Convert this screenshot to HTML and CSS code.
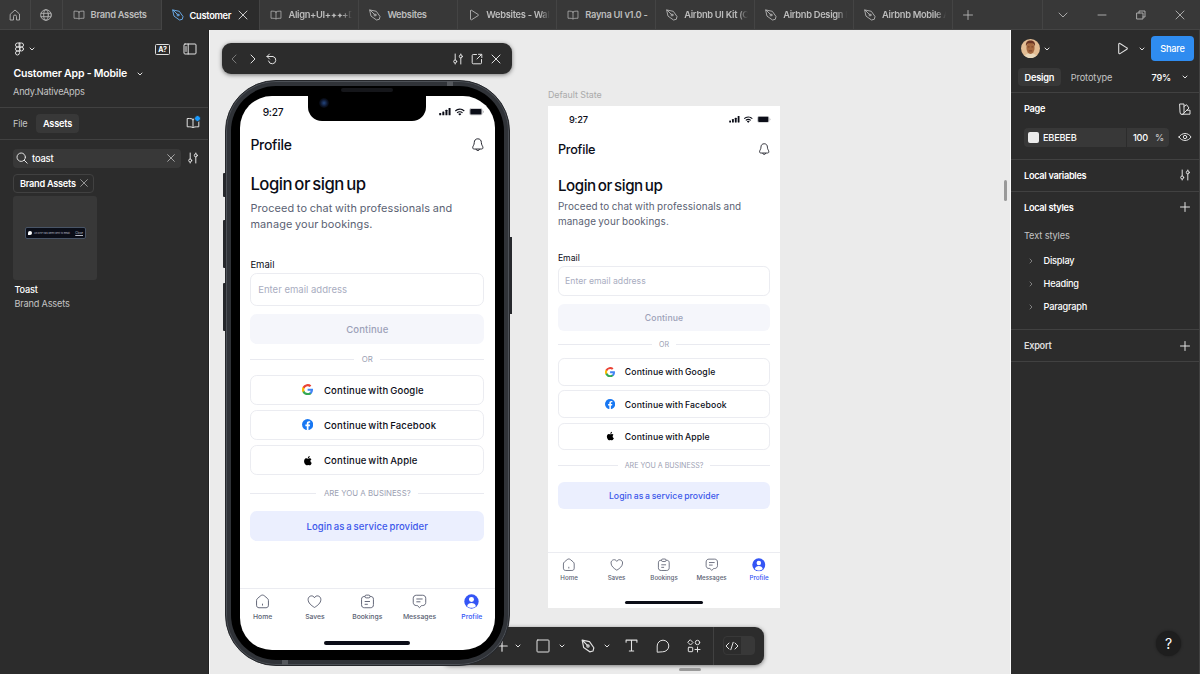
FILE: index.html
```html
<!DOCTYPE html>
<html lang="en">
<head>
    <meta charset="UTF-8">
    <meta name="viewport" content="width=device-width, initial-scale=1.0">
    <title>Customer App - Mobile</title>
    <link rel="stylesheet" href="styles.css">
</head>
<body>

<!-- Icons -->
<svg class="sprite" width="0" height="0">
    <symbol id="i-home" viewBox="0 0 12 12"><path d="M1.500 5L6 1l4.500 4v6H7.500V7.500a1.500 1.500 0 0 0-3 0V11h-3z"/></symbol>
    <symbol id="i-globe" viewBox="0 0 12 12"><circle cx="6" cy="6" r="5.300"/><ellipse cx="6" cy="6" rx="2.300" ry="5.300"/><path d="M1 4.300h10M1 7.700h10"/></symbol>
    <symbol id="i-book" viewBox="0 0 14 12"><path d="M7 2.500C6 1.500 4.500 1.500 1.200 1.500v8.300c3.300 0 4.800 0 5.800 1 1-1 2.500-1 5.800-1V1.500C9.500 1.500 8 1.500 7 2.500zM7 2.500v8"/></symbol>
    <symbol id="i-pen" viewBox="0 0 12 12"><path d="M1 1l6.300 1.300 3.700 5.200-.7 2.800-2.800.7L2.300 7.300zM1 1l4.300 4.300"/><circle cx="6" cy="6" r="1"/></symbol>
    <symbol id="i-play" viewBox="0 0 12 12"><path d="M2.500 2v8c0 .7.600 1 1.200.7l6.300-4c.6-.3.600-1 0-1.300l-6.300-4c-.6-.4-1.200-.1-1.200.6z"/></symbol>
    <symbol id="i-close" viewBox="0 0 12 12"><path d="M2 2l8 8M10 2l-8 8"/></symbol>
    <symbol id="i-plus" viewBox="0 0 12 12"><path d="M6 1.500v9M1.500 6h9"/></symbol>
    <symbol id="i-down" viewBox="0 0 6 6"><path d="M1 2l2 2 2-2"/></symbol>
    <symbol id="i-wide-down" viewBox="0 0 12 12"><path d="M2 4l4 4 4-4"/></symbol>
    <symbol id="i-left" viewBox="0 0 12 12"><path d="M8 2L4 6l4 4"/></symbol>
    <symbol id="i-right" viewBox="0 0 12 12"><path d="M4 2l4 4-4 4"/></symbol>
    <symbol id="i-undo" viewBox="0 0 12 12"><path d="M3.500 1L1 3.500 3.500 6M1 3.500h6a3.700 3.700 0 1 1-4.500 4.500"/></symbol>
    <symbol id="i-sliders" viewBox="0 0 12 12"><path d="M3.200 1v6M3.200 10.200V11M8.800 11V5M8.800 1v.8"/><circle cx="3.200" cy="8.500" r="1.500"/><circle cx="8.800" cy="3.400" r="1.500"/></symbol>
    <symbol id="i-open" viewBox="0 0 12 12"><path d="M5.500 1.500H2.200a1 1 0 0 0-1 1v7.300a1 1 0 0 0 1 1h7.300a1 1 0 0 0 1-1V6.500M7.500 1.300h3.300v3.300M10.500 1.500L6 6"/></symbol>
    <symbol id="i-restore" viewBox="0 0 12 12"><path d="M2 4h6v6H2zM4 4V2h6v6H8"/></symbol>
    <symbol id="i-min" viewBox="0 0 12 12"><path d="M2 6h8"/></symbol>
    <symbol id="i-figma" viewBox="0 0 10 14"><path d="M5 1H3a2 2 0 0 0 0 4h2zM5 5H3a2 2 0 0 0 0 4h2zM5 9H3a2 2 0 1 0 2 2zM5 1h2a2 2 0 0 1 0 4H5z"/><circle cx="7" cy="7" r="2"/></symbol>
    <symbol id="i-panel" viewBox="0 0 14 12"><rect x="1" y="1" width="12" height="10" rx="1"/><path d="M5.200 1v10M3 3.500v5"/></symbol>
    <symbol id="i-search" viewBox="0 0 12 12"><circle cx="5.200" cy="5.200" r="4.200"/><path d="M8.300 8.300L11.200 11.200"/></symbol>
    <symbol id="i-swatches" viewBox="0 0 12 12"><path d="M1 1h4v8.500a2 2 0 0 1-4 0zM5 3.500l2.500-1.800L10 5l-5 5M8 7.200h3v4H3"/></symbol>
    <symbol id="i-eye" viewBox="0 0 14 12"><path d="M1 6c2.800-4.700 9.200-4.700 12 0-2.800 4.700-9.200 4.700-12 0z"/><circle cx="7" cy="6" r="1.700"/></symbol>
    <symbol id="i-square" viewBox="0 0 14 14"><rect x="1" y="1" width="12" height="12" rx=".8"/></symbol>
    <symbol id="i-text" viewBox="0 0 12 12"><path d="M1 3V1h10v2M6 1v10M4 11h4"/></symbol>
    <symbol id="i-comment" viewBox="0 0 14 14"><path d="M1.200 12.800V7A5.800 5.800 0 1 1 7 12.800z"/></symbol>
    <symbol id="i-actions" viewBox="0 0 14 14"><path d="M3.500 1L6 3.500 3.500 6 1 3.500zM10.500 8v5M8 10.500h5"/><circle cx="10.500" cy="3.500" r="2.200"/><rect x="1.300" y="8.300" width="4.400" height="4.400" rx=".6"/></symbol>
    <symbol id="i-code" viewBox="0 0 14 12"><path d="M4 3L1 6l3 3M10 3l3 3-3 3M8.200 2.300L5.800 9.700"/></symbol>

    <symbol id="a-bell" viewBox="0 0 20 20"><path d="M10 1.200c3.300 0 5.200 2.300 5.200 5.400 0 4 2.300 5 2.300 7.700 0 1.400-1 1.900-2.500 1.900H5c-1.500 0-2.500-.5-2.500-1.900 0-2.700 2.300-3.700 2.300-7.700 0-3.100 1.900-5.400 5.200-5.400zM7.500 16.500c.5 2.600 4.500 2.600 5 0"/></symbol>
    <symbol id="a-home" viewBox="0 0 24 24"><path d="M2.500 10.500c0-1.500.6-2.600 1.800-3.600l5-4.200c1.600-1.300 3.800-1.300 5.400 0l5 4.200c1.200 1 1.800 2.100 1.800 3.600V18c0 2.500-1.500 4-4 4h-11c-2.500 0-4-1.500-4-4zM12 15.500v3"/></symbol>
    <symbol id="a-heart" viewBox="0 0 24 24"><path d="M12 21.500C7 18.500 1.800 14.500 1.800 8.800c0-6 7.700-8 10.200-2.800 2.500-5.200 10.200-3.200 10.200 2.800 0 5.700-5.200 9.700-10.200 12.700z"/></symbol>
    <symbol id="a-list" viewBox="0 0 24 24"><path d="M8 4H7c-3 0-4.500 1.500-4.500 4.500V17c0 3.500 1.500 5 5 5h9c3.500 0 5-1.500 5-5V8.500c0-3-1.500-4.500-4.500-4.500h-1M7.500 12h8.500M7.500 16.500h5"/><rect x="8" y="1.800" width="8" height="4.400" rx="2"/></symbol>
    <symbol id="a-message" viewBox="0 0 24 24"><path d="M7 2h10c3 0 5 2 5 5v6.500c0 3-2 5-5 5h-1.500L12 21.800l-3.500-3.300H7c-3 0-5-2-5-5V7c0-3 2-5 5-5zM7 8h10M7 12.500h6.500"/></symbol>
    <symbol id="a-user" viewBox="0 0 24 24"><circle cx="12" cy="12" r="11.500"/><circle class="cut" cx="12" cy="9" r="4"/><path class="cut" d="M5 19.500c1-7 13-7 14 0-4 3.500-10 3.500-14 0z"/></symbol>
    <symbol id="a-google" viewBox="0 0 24 24"><path fill="#4285f4" d="M23.500 12.300c0-.9-.1-1.500-.2-2.300H12v4.500h6.500c-.3 1.500-1.100 2.800-2.500 3.700v3h4c2.300-2.100 3.500-5.200 3.500-8.900z"/><path fill="#34a853" d="M12 24c3.200 0 6-1.100 7.900-2.900l-3.900-3c-1.100.7-2.400 1.200-4 1.200-3.100 0-5.700-2.100-6.700-4.900h-4v3.100C3.300 21.300 7.300 24 12 24z"/><path fill="#fbbc05" d="M5.300 14.400a7.200 7.200 0 0 1 0-4.700V6.600h-4a12 12 0 0 0 0 10.800z"/><path fill="#ea4335" d="M12 4.800c1.800 0 3.300.6 4.600 1.800L20 3.200A12 12 0 0 0 1.300 6.600l4 3.100c1-2.800 3.600-4.900 6.700-4.900z"/></symbol>
    <symbol id="a-facebook" viewBox="0 0 24 24"><circle cx="12" cy="12" r="12" fill="#1877f2"/><path fill="#fff" d="M16.700 15.500l.5-3.500h-3.300V9.800c0-1 .5-1.900 2-1.900h1.500V5s-1.400-.3-2.700-.3c-2.700 0-4.500 1.700-4.500 4.700V12h-3v3.500h3V24h3.700v-8.500z"/></symbol>
    <symbol id="a-apple" viewBox="0 0 22 24"><path d="M17 12.700c0-2.500 2-3.700 2.200-3.800-1.200-1.700-3-2-3.700-2-1.600-.2-3 .9-3.800.9s-2-.9-3.300-.9c-1.700 0-3.300 1-4.100 2.500-1.800 3-.5 7.500 1.200 10 .9 1.200 1.900 2.600 3.200 2.500 1.300 0 1.800-.8 3.300-.8 1.600 0 2 .8 3.400.8s2.300-1.200 3.100-2.400c1-1.400 1.400-2.800 1.400-2.900-.1 0-2.900-1.100-2.900-3.900zM14.500 5.300c.7-.9 1.200-2 1-3.300-1 0-2.300.7-3 1.600-.6.800-1.200 2-1 3.100 1.100.1 2.300-.6 3-1.400z"/></symbol>
    <symbol id="a-signal" viewBox="0 0 19 12"><rect x="0" y="8" width="3.200" height="4" rx=".8"/><rect x="5" y="5.500" width="3.200" height="6.500" rx=".8"/><rect x="10" y="3" width="3.200" height="9" rx=".8"/><rect x="15" y="0" width="3.200" height="12" rx=".8"/></symbol>
    <symbol id="a-wifi" viewBox="0 0 17 11"><path d="M8.500 2.500c2.300 0 4.400.9 6 2.500l1.200-1.200a10.200 10.200 0 0 0-14.400 0L2.500 5a8.500 8.500 0 0 1 6-2.500zM8.500 6.300c1.300 0 2.500.5 3.400 1.400l1.200-1.200a6.600 6.600 0 0 0-9.200 0l1.200 1.200c.9-.9 2.100-1.400 3.400-1.400zM10.800 8.900a3.300 3.300 0 0 0-4.600 0l2.300 2.400z"/></symbol>
    <symbol id="a-battery" viewBox="0 0 24 12"><rect x=".5" y=".5" width="20" height="11" rx="3" fill="none" stroke="currentColor" opacity=".4"/><rect x="1.500" y="1.500" width="18" height="9" rx="1.500"/><path d="M22 4v4c1.500-.7 1.500-3.300 0-4z" opacity=".4"/></symbol>
</svg>

<!-- The login screen, used in the canvas frame and in the preview -->
<template id="login-screen">
    <div class="status">
        <span class="time">9:27</span>
        <svg class="signal"><use href="#a-signal"/></svg>
        <svg class="wifi"><use href="#a-wifi"/></svg>
        <svg class="battery"><use href="#a-battery"/></svg>
    </div>
    <div class="app-header">
        <span>Profile</span>
        <svg><use href="#a-bell"/></svg>
    </div>
    <div class="app-body">
        <h1>Login or sign up</h1>
        <p class="intro">Proceed to chat with professionals and<br>manage your bookings.</p>
        <div class="label">Email</div>
        <div class="input">Enter email address</div>
        <div class="btn disabled">Continue</div>
        <div class="divider">OR</div>
        <div class="btn social"><svg><use href="#a-google"/></svg>Continue with Google</div>
        <div class="btn social"><svg><use href="#a-facebook"/></svg>Continue with Facebook</div>
        <div class="btn social"><svg><use href="#a-apple"/></svg>Continue with Apple</div>
        <div class="divider business">ARE YOU A BUSINESS?</div>
        <div class="btn provider">Login as a service provider</div>
    </div>
    <div class="app-nav">
        <div class="nav-items">
            <div class="nav-item"><svg><use href="#a-home"/></svg>Home</div>
            <div class="nav-item"><svg><use href="#a-heart"/></svg>Saves</div>
            <div class="nav-item"><svg><use href="#a-list"/></svg>Bookings</div>
            <div class="nav-item"><svg><use href="#a-message"/></svg>Messages</div>
            <div class="nav-item current"><svg><use href="#a-user"/></svg>Profile</div>
        </div>
        <div class="indicator"></div>
    </div>
</template>

<div class="tabbar">
    <div class="tab-icon"><svg class="icon"><use href="#i-home"/></svg></div>
    <div class="tab-icon"><svg class="icon"><use href="#i-globe"/></svg></div>
    <div class="tab"><svg class="icon"><use href="#i-book"/></svg><span>Brand Assets</span></div>
    <div class="tab active"><svg class="icon"><use href="#i-pen"/></svg><span>Customer</span><svg class="icon close"><use href="#i-close"/></svg></div>
    <div class="tab"><svg class="icon"><use href="#i-book"/></svg><span class="cut-off">Align+UI+<small>✦✦</small>+D</span></div>
    <div class="tab"><svg class="icon"><use href="#i-pen"/></svg><span>Websites</span></div>
    <div class="tab"><svg class="icon"><use href="#i-play"/></svg><span class="cut-off">Websites - Wal</span></div>
    <div class="tab"><svg class="icon"><use href="#i-book"/></svg><span>Rayna UI v1.0 -</span></div>
    <div class="tab"><svg class="icon"><use href="#i-pen"/></svg><span class="cut-off">Airbnb UI Kit (C</span></div>
    <div class="tab"><svg class="icon"><use href="#i-pen"/></svg><span class="cut-off">Airbnb Design I</span></div>
    <div class="tab"><svg class="icon"><use href="#i-pen"/></svg><span class="cut-off">Airbnb Mobile A</span></div>
    <div class="new-tab"><svg class="icon"><use href="#i-plus"/></svg></div>
    <div class="window-buttons">
        <svg class="icon"><use href="#i-wide-down"/></svg>
        <svg class="icon"><use href="#i-min"/></svg>
        <svg class="icon"><use href="#i-restore"/></svg>
        <svg class="icon"><use href="#i-close"/></svg>
    </div>
</div>

<div class="main">
    <div class="left-panel">
        <div class="file-head">
            <div class="logo-row">
                <svg class="icon figma"><use href="#i-figma"/></svg>
                <svg class="icon chevron"><use href="#i-down"/></svg>
                <span class="missing-fonts">A?</span>
                <svg class="icon panel-toggle"><use href="#i-panel"/></svg>
            </div>
            <div class="file-name">Customer App - Mobile <svg class="icon chevron"><use href="#i-down"/></svg></div>
            <div class="team">Andy.NativeApps</div>
        </div>
        <div class="panel-tabs">
            <span>File</span>
            <span class="pill">Assets</span>
            <div class="library"><svg class="icon"><use href="#i-book"/></svg></div>
        </div>
        <div class="search-row">
            <div class="search">
                <svg class="icon"><use href="#i-search"/></svg>
                <span>toast</span>
                <svg class="icon clear"><use href="#i-close"/></svg>
            </div>
            <svg class="icon"><use href="#i-sliders"/></svg>
        </div>
        <div class="chip">Brand Assets <svg class="icon"><use href="#i-close"/></svg></div>
        <div class="thumb">
            <div class="toast"><i></i><span>An OTP has been sent to email</span><u>Close</u></div>
        </div>
        <div class="asset-name">Toast</div>
        <div class="asset-source">Brand Assets</div>
    </div>

    <div class="canvas">
        <div class="frame-label">Default State</div>
        <div class="frame screen"></div>

        <div class="toolbar">
            <svg class="icon frame-tool"><use href="#i-plus"/></svg>
            <svg class="icon chevron"><use href="#i-down"/></svg>
            <svg class="icon"><use href="#i-square"/></svg>
            <svg class="icon chevron"><use href="#i-down"/></svg>
            <svg class="icon"><use href="#i-pen"/></svg>
            <svg class="icon chevron"><use href="#i-down"/></svg>
            <svg class="icon type-tool"><use href="#i-text"/></svg>
            <svg class="icon comment-tool"><use href="#i-comment"/></svg>
            <svg class="icon"><use href="#i-actions"/></svg>
            <div class="dev-mode"><div class="switch"><svg class="icon"><use href="#i-code"/></svg></div></div>
        </div>

        <div class="preview-bar">
            <svg class="icon dim"><use href="#i-left"/></svg>
            <svg class="icon"><use href="#i-right"/></svg>
            <svg class="icon"><use href="#i-undo"/></svg>
            <svg class="icon push"><use href="#i-sliders"/></svg>
            <svg class="icon"><use href="#i-open"/></svg>
            <svg class="icon"><use href="#i-close"/></svg>
        </div>

        <div class="phone">
            <div class="side mute"></div>
            <div class="side vol-up"></div>
            <div class="side vol-down"></div>
            <div class="side power"></div>
            <div class="antenna top"></div>
            <div class="antenna bottom"></div>
            <div class="bezel">
                <div class="screen"></div>
                <div class="speaker"></div>
                <div class="notch"><div class="camera"></div></div>
            </div>
        </div>

        <div class="scroll-v"></div>
        <div class="scroll-h"></div>
    </div>

    <div class="right-panel">
        <div class="user-row">
            <svg class="avatar" viewBox="0 0 20 20">
                <circle cx="10" cy="10" r="10" fill="#e3bd94"/>
                <path d="M4 18c1-2 3-3 6-3s5 1 6 3a10 10 0 0 1-12 0z" fill="#ead9bd"/>
                <ellipse cx="10" cy="9.500" rx="4.300" ry="6.200" fill="#a4683f"/>
                <path d="M5.300 8C4.500 3 7 1.500 10 1.500s5.500 1.500 4.700 6.500c-1-3-2-3.500-4.700-3.500S6.300 5 5.300 8z" fill="#6b3423"/>
                <path d="M7 8.300h2M11 8.300h2M8.200 12.500h3.600" stroke="#6b3423" stroke-width=".8"/>
            </svg>
            <svg class="icon chevron"><use href="#i-down"/></svg>
            <svg class="icon play"><use href="#i-play"/></svg>
            <svg class="icon chevron"><use href="#i-down"/></svg>
            <div class="share">Share</div>
        </div>
        <div class="mode-row">
            <span class="pill">Design</span>
            <span class="prototype">Prototype</span>
            <span class="zoom">79%</span>
            <svg class="icon chevron"><use href="#i-down"/></svg>
        </div>
        <div class="section page">
            <div class="row"><b>Page</b><svg class="icon"><use href="#i-swatches"/></svg></div>
            <div class="fill-row">
                <div class="fill"><i></i><span>EBEBEB</span></div>
                <div class="opacity"><span>100</span><em>%</em></div>
                <svg class="icon"><use href="#i-eye"/></svg>
            </div>
        </div>
        <div class="section"><div class="row"><b>Local variables</b><svg class="icon"><use href="#i-sliders"/></svg></div></div>
        <div class="section styles">
            <div class="row"><b>Local styles</b><svg class="icon"><use href="#i-plus"/></svg></div>
            <div class="subtitle">Text styles</div>
            <div class="style"><svg class="icon"><use href="#i-right"/></svg>Display</div>
            <div class="style"><svg class="icon"><use href="#i-right"/></svg>Heading</div>
            <div class="style"><svg class="icon"><use href="#i-right"/></svg>Paragraph</div>
        </div>
        <div class="section export"><div class="row"><b>Export</b><svg class="icon"><use href="#i-plus"/></svg></div></div>
        <div class="help">?</div>
    </div>
</div>

<script>
    const template = document.getElementById('login-screen');
    document.querySelectorAll('.screen').forEach(function (screen) {
        screen.appendChild(template.content.cloneNode(true));
    });
</script>
</body>
</html>
```
FILE: styles.css
```css
* {
    box-sizing: border-box;
}

body {
    margin: 0;
    width: 1200px;
    height: 674px;
    overflow: hidden;
    display: flex;
    flex-direction: column;
    font-family: Inter, "Liberation Sans", sans-serif;
    font-size: 9.2px;
    letter-spacing: -.2px;
    color: #fff;
    background: #2c2c2c;
}

.sprite {
    position: absolute;
}

.icon {
    width: 12px;
    height: 12px;
    flex: none;
    fill: none;
    stroke: #e2e2e2;
    stroke-width: 1;
    stroke-linecap: round;
    stroke-linejoin: round;
}

.icon.chevron {
    width: 6px;
    height: 6px;
}

/* Tab bar */
.tabbar {
    display: flex;
    height: 30px;
    flex: none;
    background: #383838;
    border-bottom: 1px solid #444;
}

.tabbar .icon {
    stroke: #b5b5b5;
    stroke-width: .9;
}

.tab-icon {
    width: 31.3px;
    display: flex;
    align-items: center;
    justify-content: center;
    border-right: 1px solid #444;
}

.tab {
    width: 98.95px;
    display: flex;
    align-items: center;
    padding: 0 8px 0 10px;
    gap: 6px;
    border-right: 1px solid #444;
    color: #bcbcbc;
    font-size: 9.3px;
    font-weight: 600;
    letter-spacing: -.3px;
    white-space: nowrap;
}

.tab small {
    font-size: 6.5px;
}

.cut-off {
    -webkit-mask-image: linear-gradient(to right, #000 54px, transparent 64px);
    mask-image: linear-gradient(to right, #000 54px, transparent 64px);
}

.tab.active {
    height: 30px;
    background: #2c2c2c;
    color: #fff;
}

.tab.active .icon:first-child {
    stroke: #6db3f5;
}

.tab .close {
    margin-left: auto;
    margin-right: 2px;
    stroke: #ddd;
}

.new-tab {
    width: 90px;
    display: flex;
    align-items: center;
    padding-left: 9px;
    border-right: 1px solid #444;
}

.window-buttons {
    flex: 1;
    display: flex;
    align-items: center;
    justify-content: space-around;
}

.main {
    flex: 1;
    display: flex;
    min-height: 0;
}

/* Left panel */
.left-panel {
    width: 209px;
    background: #2c2c2c;
    border-right: 1px solid #222;
}

.file-head {
    height: 78px;
    padding: 12px 11px 0 13px;
    border-bottom: 1px solid #414141;
}

.logo-row {
    display: flex;
    align-items: center;
    height: 14px;
}

.logo-row .figma {
    width: 13px;
    height: 14px;
    margin-right: 3px;
}

.missing-fonts {
    margin-left: auto;
    width: 15px;
    height: 11px;
    border: 1px solid #ddd;
    border-radius: 1.5px;
    font-size: 7px;
    font-weight: 700;
    line-height: 9px;
    text-align: center;
}

.panel-toggle {
    width: 14px;
    margin-left: 13px;
}

.file-name {
    margin-top: 10px;
    height: 15px;
    line-height: 15px;
    font-size: 10.5px;
    font-weight: 600;
    padding-left: .5px;
}

.file-name .icon {
    margin-left: 8px;
}

.team {
    margin-top: 3.5px;
    line-height: 14px;
    color: #c4c4c4;
}

.panel-tabs {
    height: 31.5px;
    display: flex;
    align-items: center;
    padding: 0 8px 0 13px;
    border-bottom: 1px solid #414141;
    color: #c4c4c4;
}

.pill {
    height: 18.5px;
    line-height: 19px;
    padding: 0 6.500px;
    border-radius: 4px;
    background: #383838;
    color: #fff;
    font-weight: 600;
}

.panel-tabs .pill {
    margin-left: 9px;
}

.library {
    position: relative;
    margin-left: auto;
    display: flex;
}

.library .icon {
    width: 14px;
}

.library::after {
    content: "";
    position: absolute;
    right: -1px;
    top: -2px;
    width: 5px;
    height: 5px;
    border-radius: 50%;
    background: #1a9bff;
    border: .5px solid #2c2c2c;
}

.search-row {
    display: flex;
    align-items: center;
    gap: 6.5px;
    margin: 9.5px 0 0 13px;
}

.search {
    width: 167.5px;
    height: 18.5px;
    display: flex;
    align-items: center;
    gap: 4px;
    padding: 0 5px 0 3px;
    border-radius: 4px;
    background: #383838;
    font-size: 9.4px;
    font-weight: 500;
}

.search .clear {
    width: 10px;
    margin-left: auto;
    stroke: #bbb;
}

.chip {
    width: 81px;
    height: 19px;
    margin: 6px 0 3px 13px;
    padding: 0 4px 0 6px;
    display: flex;
    align-items: center;
    justify-content: space-between;
    border: 1px solid #414141;
    border-radius: 4px;
    font-weight: 600;
    letter-spacing: -.27px;
    white-space: nowrap;
}

.chip .icon {
    width: 10px;
    stroke: #aaa;
}

.thumb {
    width: 84px;
    height: 84px;
    margin-left: 13px;
    padding-left: 12px;
    display: flex;
    align-items: center;
    background: #383838;
    border-radius: 3px;
}

.toast {
    width: 61px;
    height: 12px;
    margin-top: -10px;
    display: flex;
    align-items: center;
    padding: 0 2px;
    background: #0b0e18;
    border: .5px solid #485466;
    border-radius: 2px;
    font-size: 3px;
    letter-spacing: -.06px;
    color: #b5b9c4;
    white-space: nowrap;
}

.toast i {
    width: 4px;
    height: 4px;
    margin-right: 2px;
    border-radius: 50% 50% 50% 0;
    background: #fff;
}

.toast span {
    font-size: 2.6px;
}

.toast u {
    margin-left: auto;
}

.asset-name,
.asset-source {
    margin-left: 14.5px;
    line-height: 14px;
}

.asset-name {
    margin-top: 3px;
    font-weight: 500;
}

.asset-source {
    color: #c4c4c4;
}

/* Canvas */
.canvas {
    position: relative;
    width: 802px;
    background: #ebebeb;
    border-right: 1px solid #fafafa;
    border-left: 1px solid #fafafa;
    overflow: hidden;
}

.frame-label {
    position: absolute;
    left: 338px;
    top: 59px;
    line-height: 12px;
    font-size: 8.9px;
    letter-spacing: -.05px;
    color: #aaa;
}

.frame {
    position: absolute;
    left: 338px;
    top: 75.5px;
    --s: .619px;
}

.preview-bar {
    position: absolute;
    left: 12px;
    top: 13px;
    width: 290px;
    height: 31px;
    display: flex;
    align-items: center;
    gap: 7px;
    padding: 0 10px 0 6px;
    border-radius: 9px;
    background: #2c2c2c;
    box-shadow: 0 1px 4px rgba(0, 0, 0, .5);
}

.preview-bar .dim {
    stroke: #7a7a7a;
}

.preview-bar .push {
    margin-left: auto;
}

.toolbar {
    position: absolute;
    left: 231px;
    top: 597px;
    width: 323px;
    height: 37.5px;
    display: flex;
    align-items: center;
    padding: 0 9px 0 54px;
    border-radius: 9px;
    background: #2c2c2c;
    box-shadow: 0 1px 4px rgba(0, 0, 0, .5);
}

.toolbar .icon {
    width: 14px;
    height: 14px;
}

.toolbar .chevron {
    width: 6px;
    height: 6px;
    margin: 0 15.5px 0 9px;
}

.toolbar .frame-tool + .chevron {
    margin-left: 5.5px;
}

.toolbar .type-tool {
    width: 13px;
    height: 13px;
}

.toolbar .comment-tool {
    margin: 0 17.5px;
}

.dev-mode {
    margin-left: auto;
    height: 100%;
    padding-left: 9px;
    display: flex;
    align-items: center;
    border-left: 1px solid #414141;
}

.switch {
    width: 32px;
    height: 19px;
    display: flex;
    align-items: center;
    padding-left: 1px;
    border-radius: 4px;
    background: linear-gradient(to right, #2c2c2c 17px, #383838 17px);
    border: 1px solid #383838;
}

/* Phone */
.phone {
    position: absolute;
    left: 14.5px;
    top: 50px;
    width: 285.5px;
    height: 586px;
    padding: 5px;
    border-radius: 51px;
    background: #303338;
    border: 1px solid #25272b;
    box-shadow: inset 0 0 0 1px #4c5056, inset 0 0 0 2px #303338;
}

.bezel {
    position: relative;
    width: 273.5px;
    height: 574px;
    padding: 10.3px 9px;
    border-radius: 45px;
    background: #000;
}

.phone .screen {
    --s: .6815px;
    border-radius: 32px;
}

.speaker {
    position: absolute;
    left: 110px;
    top: 1.5px;
    width: 52px;
    height: 4px;
    border-radius: 2px;
    background: #15161a;
}

.notch {
    position: absolute;
    left: 77px;
    top: 9px;
    width: 118.5px;
    height: 26px;
    border-radius: 0 0 14px 14px;
    background: #000;
}

.camera {
    width: 10px;
    height: 10px;
    margin: 3px 0 0 11px;
    border-radius: 50%;
    background: radial-gradient(circle, #1f3c6e 10%, #0c1428 50%, #030407 75%);
}

.side {
    position: absolute;
    left: -3px;
    width: 2.5px;
    border-radius: 1px 0 0 1px;
    background: #26282c;
}

.mute {
    top: 92px;
    height: 24px;
}

.vol-up {
    top: 139px;
    height: 48px;
}

.vol-down {
    top: 202px;
    height: 48px;
}

.power {
    left: auto;
    right: -2.5px;
    top: 156px;
    height: 77px;
}

.antenna {
    position: absolute;
    width: 6px;
    height: 5px;
    background: #55585d;
}

.antenna.top {
    right: 56px;
    top: 0;
}

.antenna.bottom {
    left: 56px;
    bottom: 0;
}

/* App screen, sizes are in design pixels times --s */
.screen {
    width: calc(375 * var(--s));
    height: calc(812 * var(--s));
    display: flex;
    flex-direction: column;
    background: #fff;
    color: #0b0d17;
    letter-spacing: 0;
    overflow: hidden;
}

.status {
    height: calc(46 * var(--s));
    display: flex;
    align-items: center;
    padding: 0 calc(15 * var(--s)) 0 calc(34 * var(--s));
    font-size: calc(15 * var(--s));
    font-weight: 500;
    letter-spacing: calc(-.4 * var(--s));
}

.status svg {
    height: calc(11 * var(--s));
    fill: #0b0d17;
}

.signal {
    width: calc(18 * var(--s));
    margin-left: auto;
}

.wifi {
    width: calc(17 * var(--s));
    margin: 0 calc(5 * var(--s)) 0 calc(4 * var(--s));
}

.battery {
    width: calc(23 * var(--s));
}

.app-header {
    height: calc(49 * var(--s));
    display: flex;
    align-items: center;
    justify-content: space-between;
    padding: 0 calc(15.500 * var(--s)) 0 calc(16 * var(--s));
    font-size: calc(20.5 * var(--s));
    font-weight: 500;
    letter-spacing: calc(-.4 * var(--s));
}

.app-header svg {
    width: calc(20 * var(--s));
    height: calc(20 * var(--s));
    fill: none;
    stroke: #0b0d17;
    stroke-width: 1.3;
}

.app-body {
    padding: 0 calc(16 * var(--s));
    font-size: calc(14 * var(--s));
}

.app-body h1 {
    margin: calc(19 * var(--s)) 0 calc(5.500 * var(--s));
    line-height: calc(32 * var(--s));
    font-size: calc(24.5 * var(--s));
    font-weight: 500;
    letter-spacing: calc(-.7 * var(--s));
    word-spacing: calc(-2.500 * var(--s));
}

.intro {
    margin: 0 0 calc(38 * var(--s));
    line-height: calc(24 * var(--s));
    font-size: calc(16 * var(--s));
    letter-spacing: calc(.2 * var(--s));
    word-spacing: calc(-1 * var(--s));
    color: #5a5f73;
}

.label {
    line-height: calc(20 * var(--s));
    margin-bottom: calc(2.500 * var(--s));
}

.input {
    height: calc(48 * var(--s));
    line-height: calc(46.500 * var(--s));
    padding-left: calc(10 * var(--s));
    border: 1px solid #ebecf1;
    border-radius: calc(10 * var(--s));
    color: #a9adbf;
    margin-bottom: calc(12 * var(--s));
}

.btn {
    height: calc(44 * var(--s));
    display: flex;
    align-items: center;
    justify-content: center;
    border-radius: calc(10 * var(--s));
    font-weight: 500;
    padding-top: calc(1.500 * var(--s));
    margin-bottom: calc(8 * var(--s));
}

.btn.disabled {
    background: #f5f6fb;
    color: #9ca1b8;
    margin-bottom: 0;
    letter-spacing: calc(.2 * var(--s));
}

.btn.social {
    justify-content: flex-start;
    padding-left: calc(72 * var(--s));
    border: 1px solid #ebecf1;
    letter-spacing: calc(.28 * var(--s));
    word-spacing: calc(-1.500 * var(--s));
}

.btn.social svg {
    width: calc(16.500 * var(--s));
    height: calc(16.500 * var(--s));
    margin: calc(-1.500 * var(--s)) calc(16 * var(--s)) 0 calc(2 * var(--s));
}

.btn.provider {
    background: #ebeffe;
    color: #3c57ea;
    letter-spacing: calc(.1 * var(--s));
    word-spacing: calc(-1.200 * var(--s));
}

.divider {
    height: calc(44.500 * var(--s));
    display: flex;
    align-items: center;
    gap: calc(11 * var(--s));
    font-size: calc(11.500 * var(--s));
    color: #9ca1b3;
}

.divider::before,
.divider::after {
    content: "";
    flex: 1;
    height: 1px;
    background: #e9eaf0;
}

.divider.business {
    margin-top: calc(-8 * var(--s));
    height: calc(52 * var(--s));
}

.app-nav {
    margin-top: auto;
    height: calc(90 * var(--s));
    border-top: 1px solid #ebecf1;
}

.nav-items {
    display: flex;
    justify-content: space-between;
    padding: calc(7.500 * var(--s)) calc(7 * var(--s)) 0;
}

.nav-item {
    width: calc(54 * var(--s));
    display: flex;
    flex-direction: column;
    align-items: center;
    line-height: calc(14 * var(--s));
    font-size: calc(10 * var(--s));
    font-weight: 500;
    color: #5a5f73;
}

.nav-item svg {
    width: calc(22 * var(--s));
    height: calc(22 * var(--s));
    margin-bottom: calc(4 * var(--s));
    fill: none;
    stroke: #4e5366;
    stroke-width: 1.4;
}

.nav-item.current {
    color: #3455f5;
}

.current svg {
    stroke: none;
    fill: #3455f5;
}

.cut {
    fill: #fff;
}

.indicator {
    width: calc(126 * var(--s));
    height: calc(5 * var(--s));
    margin: calc(29 * var(--s)) auto 0;
    border-radius: 3px;
    background: #0b0d17;
}

.scroll-v {
    position: absolute;
    left: 794px;
    top: 150px;
    width: 3px;
    height: 21px;
    border-radius: 2px;
    background: #999;
}

.scroll-h {
    position: absolute;
    left: 469px;
    top: 638px;
    width: 22px;
    height: 3px;
    border-radius: 2px;
    background: #999;
}

/* Right panel */
.right-panel {
    position: relative;
    flex: 1;
    background: #2c2c2c;
    border-right: 1px solid #414141;
}

.user-row {
    display: flex;
    align-items: center;
    height: 37px;
    padding: 0 5px 0 10px;
}

.avatar {
    width: 19px;
    height: 19px;
    margin-right: 4px;
}

.user-row .play {
    width: 13px;
    height: 13px;
    margin: 0 10px 0 auto;
}

.share {
    width: 43px;
    height: 25px;
    margin-left: 6px;
    line-height: 25px;
    text-align: center;
    border-radius: 4px;
    background: #2f8cf0;
    font-weight: 500;
}

.mode-row {
    display: flex;
    align-items: center;
    height: 26px;
    padding: 0 11px 5px 7px;
    border-bottom: 1px solid #414141;
}

.mode-row .prototype {
    margin-left: 10px;
    letter-spacing: -.1px;
    color: #c4c4c4;
}

.mode-row .zoom {
    margin-left: auto;
    margin-right: 11px;
    font-weight: 500;
}

.section {
    height: 32px;
    padding-top: 8px;
    border-bottom: 1px solid #414141;
}

.section .row {
    display: flex;
    align-items: center;
    justify-content: space-between;
    height: 15px;
    padding: 0 8.5px 0 13px;
}

.row b {
    font-weight: 600;
    letter-spacing: -.3px;
}

.section.page {
    height: 66.5px;
}

.fill-row {
    display: flex;
    align-items: center;
    margin-top: 12px;
    padding: 0 7.5px 0 13px;
}

.fill {
    width: 102px;
    height: 18.5px;
    display: flex;
    align-items: center;
    gap: 4px;
    padding-left: 4px;
    border-radius: 4px 0 0 4px;
    background: #383838;
    font-weight: 500;
}

.fill i {
    width: 11px;
    height: 11px;
    border-radius: 2px;
    background: #ebebeb;
}

.opacity {
    width: 42px;
    height: 18.5px;
    margin-left: 1px;
    padding: 0 5px 0 6px;
    display: flex;
    align-items: center;
    justify-content: space-between;
    border-radius: 0 4px 4px 0;
    background: #383838;
    font-weight: 500;
}

.opacity em {
    font-style: normal;
    color: #c4c4c4;
}

.fill-row .icon {
    width: 14px;
    margin-left: auto;
}

.section.styles {
    height: 138.5px;
}

.subtitle {
    margin: 13px 0 6.5px 13px;
    line-height: 15px;
    letter-spacing: -.1px;
    color: #c4c4c4;
}

.style {
    height: 23.2px;
    display: flex;
    align-items: center;
    gap: 9.5px;
    padding-left: 17px;
    font-weight: 500;
}

.style .icon {
    width: 6px;
    height: 6px;
    stroke: #999;
    stroke-width: 1.5;
}

.export .row b {
    color: #ddd;
}

.help {
    position: absolute;
    left: 145px;
    bottom: 18px;
    width: 25px;
    height: 25px;
    line-height: 25px;
    text-align: center;
    border-radius: 50%;
    background: #1e1e1e;
    box-shadow: 0 0 3px rgba(0, 0, 0, .4);
    font-size: 14px;
}
```
